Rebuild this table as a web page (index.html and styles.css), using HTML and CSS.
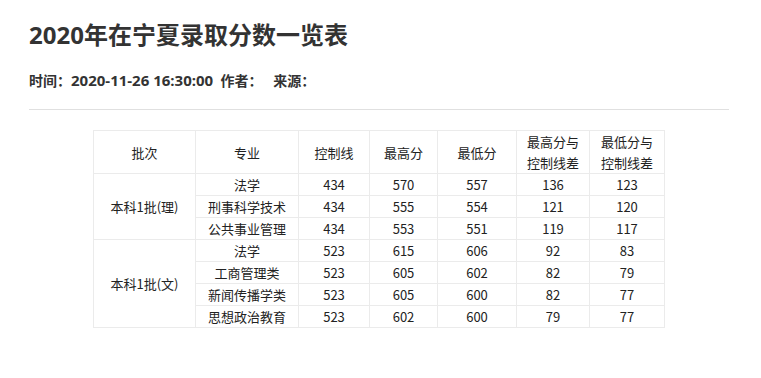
FILE: index.html
```html
<!DOCTYPE html>
<html lang="zh">
<head>
<meta charset="utf-8">
<title>2020年在宁夏录取分数一览表</title>
<link rel="stylesheet" href="styles.css">
</head>
<body>
<div class="page">
  <h1 class="title">2020年在宁夏录取分数一览表</h1>
  <div class="meta">时间：<span class="date">2020-11-26 16:30:00</span>&nbsp;&nbsp;作者：&nbsp;&nbsp;&nbsp;来源：</div>
  <div class="rule"></div>
  <table class="scores">
    <colgroup>
      <col class="c1"><col class="c2"><col class="c3"><col class="c4"><col class="c5"><col class="c6"><col class="c7">
    </colgroup>
    <thead>
      <tr class="head">
        <td>批次</td><td>专业</td><td>控制线</td><td>最高分</td><td>最低分</td><td>最高分与<br>控制线差</td><td>最低分与<br>控制线差</td>
      </tr>
    </thead>
    <tbody>
      <tr><td rowspan="3">本科1批(理)</td><td>法学</td><td>434</td><td>570</td><td>557</td><td>136</td><td>123</td></tr>
      <tr><td>刑事科学技术</td><td>434</td><td>555</td><td>554</td><td>121</td><td>120</td></tr>
      <tr><td>公共事业管理</td><td>434</td><td>553</td><td>551</td><td>119</td><td>117</td></tr>
      <tr><td rowspan="4">本科1批(文)</td><td>法学</td><td>523</td><td>615</td><td>606</td><td>92</td><td>83</td></tr>
      <tr><td>工商管理类</td><td>523</td><td>605</td><td>602</td><td>82</td><td>79</td></tr>
      <tr><td>新闻传播学类</td><td>523</td><td>605</td><td>600</td><td>82</td><td>77</td></tr>
      <tr><td>思想政治教育</td><td>523</td><td>602</td><td>600</td><td>79</td><td>77</td></tr>
    </tbody>
  </table>
</div>
</body>
</html>
```
FILE: styles.css
```css
html, body {
  margin: 0;
  padding: 0;
  background: #fff;
}
body {
  font-family: "Noto Sans CJK SC", "Noto Sans", sans-serif;
  color: #333;
}
.page {
  width: 700px;
  padding: 0 0 0 29px;
}
.title {
  margin: 0;
  padding-top: 17px;
  font-family: "Open Sans", "Noto Sans CJK SC", sans-serif;
  font-size: 24px;
  line-height: 36px;
  font-weight: 700;
  color: #333;
}
.meta {
  margin-top: 17px;
  font-family: "Open Sans", "Noto Sans CJK SC", sans-serif;
  font-size: 14px;
  line-height: 20px;
  font-weight: 700;
  color: #333;
}
.date {
  font-size: 15px;
}
.rule {
  margin-top: 18px;
  height: 1px;
  background: #e0e0e0;
}
.scores {
  margin: 20px auto 0;
  border-collapse: collapse;
  font-size: 13px;
  color: #222;
  table-layout: fixed;
  width: 572px;
}
.c1 { width: 102px; }
.c2 { width: 103px; }
.c3 { width: 71px; }
.c4 { width: 68px; }
.c5 { width: 79px; }
.c6 { width: 73px; }
.c7 { width: 75px; }
.scores td {
  border: 1px solid #ebebeb;
  text-align: center;
  vertical-align: middle;
  padding: 0;
  height: 21px;
  line-height: 21px;
  white-space: nowrap;
}
.scores .head td {
  height: 42px;
  line-height: 21px;
}
```
